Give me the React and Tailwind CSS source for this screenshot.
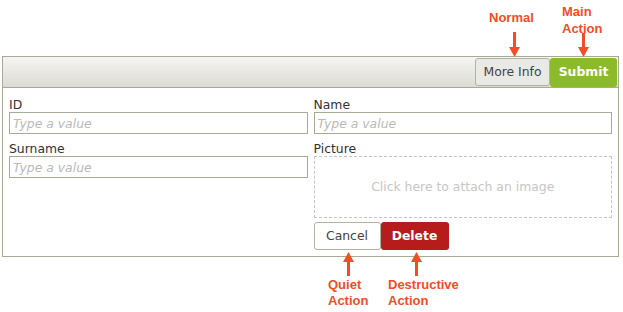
import React from 'react';

// Callout arrow: shaft + triangular head, head at top or bottom
function Arrow({ up = false, height = 24, className = '' }) {
  const h = height;
  return (
    <svg width="11" height={h} viewBox={`0 0 11 ${h}`} className={className}>
      {up ? (
        <>
          <polygon points={`0,10 11,10 5.5,0`} fill="#f24d27" />
          <rect x="4" y="9" width="3" height={h - 9} fill="#f24d27" />
        </>
      ) : (
        <>
          <rect x="4" y="0" width="3" height={h - 9} fill="#f24d27" />
          <polygon points={`0,${h - 10} 11,${h - 10} 5.5,${h}`} fill="#f24d27" />
        </>
      )}
    </svg>
  );
}

function Field({ label, className = '' }) {
  return (
    <div className={`flex flex-col ${className}`}>
      <label className="h-[14px] leading-[14px] text-[12.4px] text-[#333]">{label}</label>
      <input
        type="text"
        placeholder="Type a value"
        className="h-[22px] w-full border border-[#a9a996] bg-white px-[3px] text-[12.4px] text-[#333] outline-none placeholder:italic placeholder:text-[#b9b9b9]"
      />
    </div>
  );
}

export default function App() {
  return (
    <div className="relative w-[623px] h-[312px] bg-white overflow-hidden font-['DejaVu_Sans',sans-serif]">
      {/* form panel */}
      <div className="ml-[2px] mt-[56px] w-[617px] border border-[#aaa997]">
        <div className="h-[31px] flex items-center justify-end pr-[1px] border-b border-[#aaa997] bg-gradient-to-b from-[#f5f5f2] to-[#dcdbd3]">
          <button className="h-[28px] w-[75px] rounded-[3px] border border-[#b3b2a2] bg-[#e9e9e6] text-[12.4px] text-[#444]">
            More Info
          </button>
          <button className="h-[29px] w-[67px] rounded-[3px] bg-[#8bbb2b] text-[12.4px] font-bold text-white">
            Submit
          </button>
        </div>

        <div className="grid grid-cols-2 gap-x-[6px] px-[6px] pt-[10px] pb-[6px]">
          <div className="flex flex-col">
            <Field label="ID" />
            <Field label="Surname" className="mt-[8px]" />
          </div>
          <div className="flex flex-col">
            <Field label="Name" />
            <div className="mt-[8px] flex flex-col">
              <label className="h-[14px] leading-[14px] text-[12.4px] text-[#333]">Picture</label>
              <div className="h-[62px] flex items-center justify-center border border-dashed border-[#c4c4c4] text-[12.4px] text-[#c6c6c6]">
                Click here to attach an image
              </div>
            </div>
            <div className="mt-[4px] flex">
              <button className="h-[28px] w-[67px] rounded-[3px] border border-[#b3b2a2] bg-white text-[12.4px] text-[#444]">
                Cancel
              </button>
              <button className="h-[28px] w-[68px] rounded-[3px] bg-[#b71c1c] text-[12.4px] font-bold text-white">
                Delete
              </button>
            </div>
          </div>
        </div>
      </div>

      {/* callouts */}
      <div className="absolute left-[489px] top-[10px] text-[13px] leading-[15px] font-bold text-[#f24d27] font-['Liberation_Sans',sans-serif]">
        Normal
      </div>
      <Arrow height={25} className="absolute left-[509px] top-[32px]" />

      <div className="absolute left-[562px] top-[3px] text-[13px] leading-[17px] font-bold text-[#f24d27] font-['Liberation_Sans',sans-serif]">
        Main
        <br />
        Action
      </div>
      <Arrow height={24} className="absolute left-[578px] top-[33px]" />

      <Arrow up height={24} className="absolute left-[343px] top-[252px]" />
      <div className="absolute left-[328px] top-[277px] text-[13px] leading-[16px] font-bold text-[#f24d27] font-['Liberation_Sans',sans-serif]">
        Quiet
        <br />
        Action
      </div>

      <Arrow up height={24} className="absolute left-[411px] top-[252px]" />
      <div className="absolute left-[388px] top-[277px] text-[13px] leading-[16px] font-bold text-[#f24d27] font-['Liberation_Sans',sans-serif]">
        Destructive
        <br />
        Action
      </div>
    </div>
  );
}
